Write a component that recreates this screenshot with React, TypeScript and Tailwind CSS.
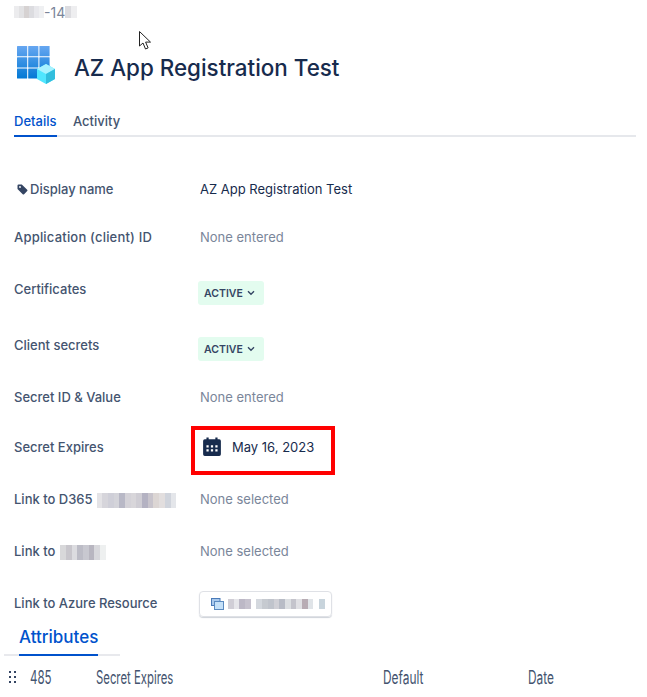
import React from "react";

const Blur = ({ colors, size = 6, h = 12 }: { colors: string[]; size?: number; h?: number }) => (
  <span className="inline-flex shrink-0" style={{ height: h }}>
    {colors.map((c, i) => (
      <span key={i} className="block h-full" style={{ width: size, backgroundColor: c }} />
    ))}
  </span>
);

const Logo = () => (
  <svg width="40" height="40" viewBox="0 0 40 40" className="shrink-0">
    <defs>
      <linearGradient id="g" gradientUnits="userSpaceOnUse" x1="0" y1="0" x2="0" y2="34">
        <stop offset="0" stopColor="#6aa8f2" />
        <stop offset="1" stopColor="#0078d4" />
      </linearGradient>
    </defs>
    {[0, 11.2, 22.4].map((y) =>
      [0, 11.2, 22.4].map((x) => (
        <rect key={`${x}-${y}`} x={x + 1} y={y + 1} width="10.200" height="10.200" rx="0.5" fill="url(#g)" />
      ))
    )}
    <path d="M30 19l9 5v10l-9 5-9-5V24z" fill="#50e6ff" />
    <path d="M30 19l9 5-9 5-9-5z" fill="#a8f2ff" />
    <path d="M30 29v10l9-5V24z" fill="#32bedd" />
  </svg>
);

const Cursor = () => (
  <svg width="14" height="20" viewBox="0 0 14 20" className="absolute left-[139px] top-[31px]">
    <path d="M0.500 0.500v14.500l3.500-3 2.500 6 2.600-1.100-2.500-5.800h4.900z" fill="#fff" stroke="#222" strokeWidth="1" />
  </svg>
);

const Tag = () => (
  <svg width="11" height="11" viewBox="0 0 11 11" className="shrink-0 -translate-y-px">
    <path d="M0.500 1.600A1.100 1.100 0 0 1 1.600 0.500h3.200l5.400 5.200a1 1 0 0 1 0 1.400l-3.100 3.100a1 1 0 0 1-1.400 0L0.500 4.900z" fill="#344563" />
    <circle cx="3" cy="3" r="0.900" fill="#fff" />
  </svg>
);

const Label = ({ children, className = "" }: { children: React.ReactNode; className?: string }) => (
  <div className={`flex h-[26px] w-[186px] shrink-0 items-center whitespace-nowrap text-[13px] font-medium text-[#44546f] ${className}`}>{children}</div>
);

const None = ({ children }: { children: React.ReactNode }) => (
  <div className="text-[13px] text-[#7a869a]">{children}</div>
);

const Badge = () => (
  <div className="ml-[-2px] mt-[4px] flex h-6 w-[66px] items-center gap-1 rounded-[3px] bg-[#e3fcef] pl-1.5 text-[10.500px] font-semibold text-[#344563]">
    <span className="translate-y-px">ACTIVE</span>
    <svg width="8" height="6" viewBox="0 0 8 6"><path d="M1 1.200l3 3 3-3" fill="none" stroke="#344563" strokeWidth="1.400" /></svg>
  </div>
);

export default function App() {
  return (
    <div className="relative h-[697px] w-[647px] overflow-hidden bg-white font-['Inter','Liberation_Sans',sans-serif] text-[#172b4d]">
      <Cursor />
      {/* annotation drawn over the date field */}
      <div className="absolute left-[191px] top-[426px] h-[49px] w-[144px] border-4 border-[#ff0000]" />

      <div className="flex h-6 items-center pl-3.5 text-[14px] text-[#7a869a]">
        <Blur size={5} h={12} colors={["#ececee", "#e2e2e4", "#d6d2d2", "#dcdce0", "#e8e8ec", "#eff0f2"]} />
        <span>-14</span>
        <Blur size={6} h={12} colors={["#dcdce0", "#eeeef0"]} />
      </div>

      <div className="mt-[21px] flex h-10 items-start pl-4">
        <Logo />
        <h1 className="ml-[18px] mt-2 whitespace-nowrap text-[22.400px] font-medium leading-[30px] text-[#172b4d]">AZ App Registration Test</h1>
      </div>

      <div className="ml-3.5 mt-5 flex h-8 w-[622px] gap-4 border-b-2 border-[#e6e8ec] text-[13px] font-medium">
        <div className="h-8 w-[43px] border-b-2 border-[#0052cc] pt-[7px] text-[#0052cc]">Details</div>
        <div className="pt-[7px] text-[#44546f]">Activity</div>
      </div>

      <div className="mt-10 flex flex-col pl-3.5">
        <div className="flex h-[26px] items-center">
          <Label className="gap-0.5 pl-[3px]"><Tag />Display name</Label>
          <div className="text-[13px]">AZ App Registration Test</div>
        </div>
        <div className="mt-[22px] flex h-[26px] items-center">
          <Label className="tracking-[0.2px]">Application (client) ID</Label>
          <None>None entered</None>
        </div>
        <div className="mt-[26px] flex h-[29px] items-start">
          <Label>Certificates</Label>
          <Badge />
        </div>
        <div className="mt-[27px] flex h-[29px] items-start">
          <Label>Client secrets</Label>
          <Badge />
        </div>
        <div className="mt-[23px] flex h-[26px] items-center">
          <Label>Secret ID &amp; Value</Label>
          <None>None entered</None>
        </div>
        <div className="mt-6 flex h-[26px] items-center">
          <Label>Secret Expires</Label>
          <svg width="20" height="20" viewBox="0 0 18 18" className="ml-[2px] -translate-y-px shrink-0">
            <path d="M4 0.500h2V2h6V0.500h2V2h1.500A1.500 1.500 0 0 1 17 3.500v12a1.500 1.500 0 0 1-1.500 1.500h-13A1.500 1.500 0 0 1 1 15.500v-12A1.500 1.500 0 0 1 2.500 2H4z" fill="#172b4d" />
            <path d="M4 7.500h2v2H4zM8 7.500h2v2H8zM12 7.500h2v2h-2zM4 11h2v2H4zM8 11h2v2H8zM12 11h2v2h-2z" fill="#fff" />
          </svg>
          <span className="ml-[10px] text-[13px] text-[#172b4d]">May 16, 2023</span>
        </div>
        <div className="mt-[26px] flex h-[26px] items-center">
          <Label>
            Link to D365
            <span className="ml-1 flex"><Blur size={5.700} h={15} colors={["#e4e3e6", "#d6d5db", "#cfcfd8", "#d4d4da", "#b8b8c6", "#d4d2d8", "#d8d6da", "#cfcdd4", "#b4b2c2", "#c8c4cc", "#dcd6d4", "#e2dede", "#d0d4dc", "#e4e6ea"]} /></span>
          </Label>
          <None>None selected</None>
        </div>
        <div className="mt-[26px] flex h-[26px] items-center">
          <Label>
            Link to
            <span className="ml-[5px] flex"><Blur size={5.700} h={15} colors={["#d8d8da", "#c8c6cc", "#dcdce0", "#bcbcc6", "#c8c8d0", "#b8b6c0", "#d8d8dc", "#eef0f0"]} /></span>
          </Label>
          <None>None selected</None>
        </div>
        <div className="mt-[26px] flex h-[26px] items-center">
          <Label>Link to Azure Resource</Label>
          <div className="ml-[-1px] flex h-[26px] w-[133px] items-center rounded-[4px] border border-[#dfe1e6] pl-[11px] shadow-[0_1px_1px_rgba(9,30,66,0.2)]">
            <svg width="13" height="12" viewBox="0 0 13 12" className="mr-1 shrink-0">
              <rect x="0.500" y="0.500" width="8.500" height="7" fill="#a8c8ec" stroke="#4a7ab8" />
              <rect x="3.500" y="3.500" width="9" height="8" fill="#c4e0f8" stroke="#5a8ac0" />
            </svg>
            <Blur size={5.700} h={10} colors={["#d0ced6", "#e6e6ea", "#bcb8c6", "#c6c2ce", "#ffffff", "#d4d8de", "#c6cad0", "#c0c4cc", "#d0d0d6", "#b8bcc6", "#dcdfe2", "#c4c4cc", "#e0e0e4", "#b8acb4", "#e0e4e8", "#ffffff", "#c8d4dc"]} />
          </div>
        </div>
      </div>

      <div className="ml-1 mt-2 h-[31px] w-[116px] border-b-2 border-[#e8e9ed]">
        <div className="ml-[15px] h-[31px] w-[79px] border-b-2 border-[#0052cc] text-[17px] font-medium leading-6 whitespace-nowrap text-[#0052cc]">Attributes</div>
      </div>

      <div className="mt-[9px] flex h-6 items-center overflow-hidden whitespace-nowrap text-[18px] text-[#44546f]">
        <div className="ml-[9px] grid w-[7px] shrink-0 grid-cols-2 gap-[3px]">
          {[0, 1, 2, 3, 4, 5].map((i) => <span key={i} className="h-[2px] w-[2px] bg-[#344563]" />)}
        </div>
        <span className="ml-[14px] w-[66px] shrink-0 origin-left scale-x-[0.64]">485</span>
        <span className="w-[287px] shrink-0 origin-left scale-x-[0.63]">Secret Expires</span>
        <span className="w-[145px] shrink-0 origin-left scale-x-[0.66]">Default</span>
        <span className="shrink-0 origin-left scale-x-[0.66]">Date</span>
      </div>
    </div>
  );
}
